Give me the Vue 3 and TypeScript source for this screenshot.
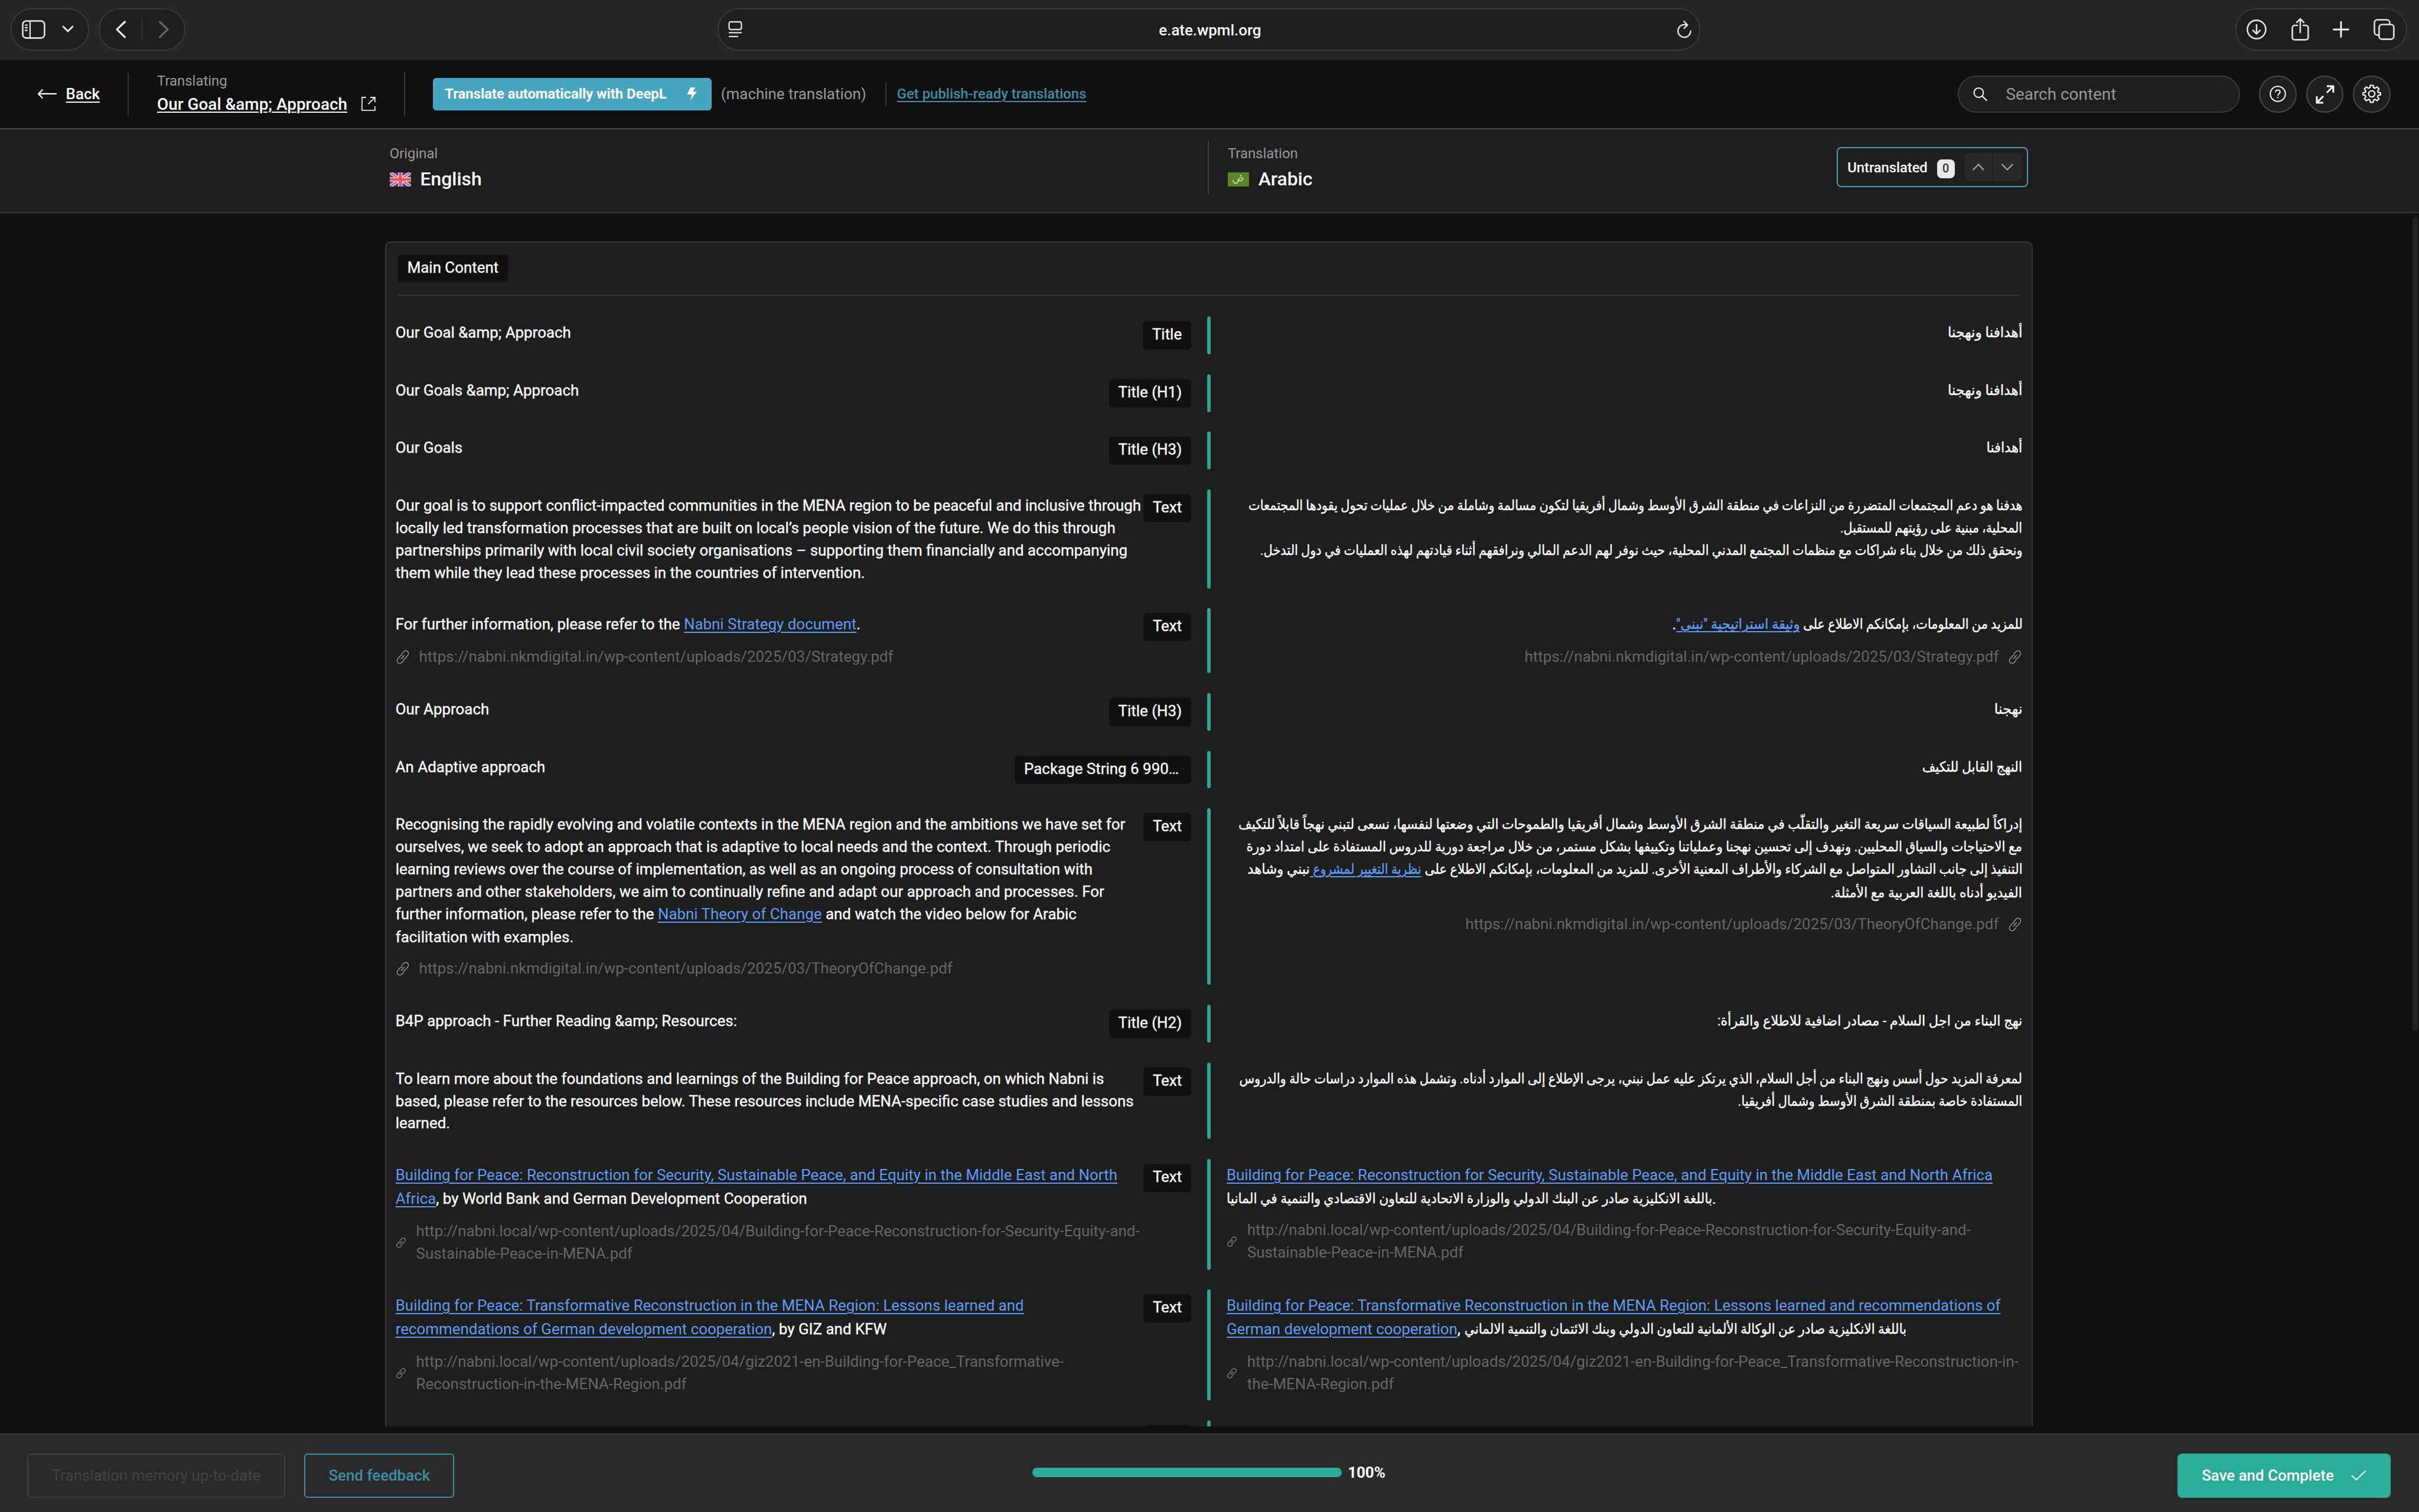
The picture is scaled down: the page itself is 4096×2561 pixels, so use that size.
<script setup lang="ts">
import { ref, onMounted } from 'vue'

interface Seg { t: string; link?: boolean; ar?: number }
interface Cell { lines: Seg[][]; url?: string[] }
interface Row { h: number; chip: string; chipW?: number; src: Cell; dst: Cell; rtl: boolean }

const s = (t: string): Seg => ({ t })
const l = (t: string): Seg => ({ t, link: true })
const plain = (...t: string[]): Cell => ({ lines: t.map((x) => [s(x)]) })

const STRATEGY = 'https://nabni.nkmdigital.in/wp-content/uploads/2025/03/Strategy.pdf'
const THEORY = 'https://nabni.nkmdigital.in/wp-content/uploads/2025/03/TheoryOfChange.pdf'

// `ar` holds the set width of an Arabic run
const a = (t: string, ar: number): Seg => ({ t, ar })

const rows: Row[] = [
  { h: 64, chip: 'Title', rtl: true, src: plain('Our Goal &amp; Approach'), dst: { lines: [[a('أهدافنا ونهجنا', 127)]] } },
  { h: 64, chip: 'Title (H1)', rtl: true, src: plain('Our Goals &amp; Approach'), dst: { lines: [[a('أهدافنا ونهجنا', 127)]] } },
  { h: 64, chip: 'Title (H3)', rtl: true, src: plain('Our Goals'), dst: { lines: [[a('أهدافنا', 61)]] } },
  {
    h: 168, chip: 'Text', rtl: true,
    src: plain(
      'Our goal is to support conflict-impacted communities in the MENA region to be peaceful and inclusive through',
      'locally led transformation processes that are built on local’s people vision of the future. We do this through',
      'partnerships primarily with local civil society organisations – supporting them financially and accompanying',
      'them while they lead these processes in the countries of intervention.'
    ),
    dst: {
      lines: [
        [a('هدفنا هو دعم المجتمعات المتضررة من النزاعات في منطقة الشرق الأوسط وشمال أفريقيا لتكون مسالمة وشاملة من خلال عمليات تحول يقودها المجتمعات', 1315)],
        [a('المحلية، مبنية على رؤيتهم للمستقبل.', 309)],
        [a('ونحقق ذلك من خلال بناء شراكات مع منظمات المجتمع المدني المحلية، حيث نوفر لهم الدعم المالي ونرافقهم أثناء قيادتهم لهذه العمليات في دول التدخل.', 1295)],
      ],
    },
  },
  {
    h: 110, chip: 'Text', rtl: true,
    src: { lines: [[s('For further information, please refer to the '), l('Nabni Strategy document'), s('.')]], url: [STRATEGY] },
    dst: { lines: [[a('للمزيد من المعلومات، بإمكانكم الاطلاع على ', 378), { t: 'وثيقة استراتيجية "نبني"', link: true, ar: 210 }, s('.')]], url: [STRATEGY] },
  },
  { h: 64, chip: 'Title (H3)', rtl: true, src: plain('Our Approach'), dst: { lines: [[a('نهجنا', 48)]] } },
  { h: 64, chip: 'Package String 6 990…', chipW: 300, rtl: true, src: plain('An Adaptive approach'), dst: { lines: [[a('النهج القابل للتكيف', 170)]] } },
  {
    h: 300, chip: 'Text', rtl: true,
    src: {
      lines: [
        [s('Recognising the rapidly evolving and volatile contexts in the MENA region and the ambitions we have set for')],
        [s('ourselves, we seek to adopt an approach that is adaptive to local needs and the context. Through periodic')],
        [s('learning reviews over the course of implementation, as well as an ongoing process of consultation with')],
        [s('partners and other stakeholders, we aim to continually refine and adapt our approach and processes. For')],
        [s('further information, please refer to the '), l('Nabni Theory of Change'), s(' and watch the video below for Arabic')],
        [s('facilitation with examples.')],
      ],
      url: [THEORY],
    },
    dst: {
      lines: [
        [a('إدراكاً لطبيعة السياقات سريعة التغير والتقلّب في منطقة الشرق الأوسط وشمال أفريقيا والطموحات التي وضعتها لنفسها، نسعى لتبني نهجاً قابلاً للتكيف', 1332)],
        [a('مع الاحتياجات والسياق المحليين. ونهدف إلى تحسين نهجنا وعملياتنا وتكييفها بشكل مستمر، من خلال مراجعة دورية للدروس المستفادة على امتداد دورة', 1318)],
        [
          a('التنفيذ إلى جانب التشاور المتواصل مع الشركاء والأطراف المعنية الأخرى. للمزيد من المعلومات، بإمكانكم الاطلاع على ', 1021),
          { t: 'نظرية التغيير لمشروع ', link: true, ar: 189 },
          a('نبني وشاهد', 106),
        ],
        [a('الفيديو أدناه باللغة العربية مع الأمثلة.', 325)],
      ],
      url: [THEORY],
    },
  },
  { h: 64, chip: 'Title (H2)', rtl: true, src: plain('B4P approach - Further Reading &amp; Resources:'), dst: { lines: [[a('نهج البناء من اجل السلام - مصادر اضافية للاطلاع والقرأة:', 518)]] } },
  {
    h: 130, chip: 'Text', rtl: true,
    src: plain(
      'To learn more about the foundations and learnings of the Building for Peace approach, on which Nabni is',
      'based, please refer to the resources below. These resources include MENA-specific case studies and lessons',
      'learned.'
    ),
    dst: {
      lines: [
        [a('لمعرفة المزيد حول أسس ونهج البناء من أجل السلام، الذي يرتكز عليه عمل نبني، يرجى الإطلاع إلى الموارد أدناه. وتشمل هذه الموارد دراسات حالة والدروس', 1330)],
        [a('المستفادة خاصة بمنطقة الشرق الأوسط وشمال أفريقيا.', 483)],
      ],
    },
  },
  {
    h: 188, chip: 'Text', rtl: false,
    src: {
      lines: [
        [l('Building for Peace: Reconstruction for Security, Sustainable Peace, and Equity in the Middle East and North')],
        [l('Africa'), s(', by World Bank and German Development Cooperation')],
      ],
      url: ['http://nabni.local/wp-content/uploads/2025/04/Building-for-Peace-Reconstruction-for-Security-Equity-and-', 'Sustainable-Peace-in-MENA.pdf'],
    },
    dst: {
      lines: [
        [l('Building for Peace: Reconstruction for Security, Sustainable Peace, and Equity in the Middle East and North Africa')],
        [a('باللغة الانكليزية صادر عن البنك الدولي والوزارة الاتحادية للتعاون الاقتصادي والتنمية في المانيا', 825), s('.')],
      ],
      url: ['http://nabni.local/wp-content/uploads/2025/04/Building-for-Peace-Reconstruction-for-Security-Equity-and-', 'Sustainable-Peace-in-MENA.pdf'],
    },
  },
  {
    h: 188, chip: 'Text', rtl: false,
    src: {
      lines: [
        [l('Building for Peace: Transformative Reconstruction in the MENA Region: Lessons learned and')],
        [l('recommendations of German development cooperation'), s(', by GIZ and KFW')],
      ],
      url: ['http://nabni.local/wp-content/uploads/2025/04/giz2021-en-Building-for-Peace_Transformative-', 'Reconstruction-in-the-MENA-Region.pdf'],
    },
    dst: {
      lines: [
        [l('Building for Peace: Transformative Reconstruction in the MENA Region: Lessons learned and recommendations of')],
        [l('German development cooperation'), s(', '), a('باللغة الانكليزية صادر عن الوكالة الألمانية للتعاون الدولي وبنك الائتمان والتنمية الالماني', 751)],
      ],
      url: ['http://nabni.local/wp-content/uploads/2025/04/giz2021-en-Building-for-Peace_Transformative-Reconstruction-in-', 'the-MENA-Region.pdf'],
    },
  },
  { h: 64, chip: '', chipW: 81, rtl: true, src: plain(''), dst: plain('') },
]

const hasLink = (line: Seg[]) => line.some((x) => x.link)

const root = ref<HTMLElement | null>(null)

// Each Arabic run sits in a box of its set width; the glyphs are condensed to fill it.
onMounted(() => {
  const el = root.value
  if (!el) return
  el.querySelectorAll<HTMLElement>('.ar').forEach((box) => {
    const inner = box.firstElementChild as HTMLElement
    const k = box.getBoundingClientRect().width / inner.getBoundingClientRect().width
    inner.style.transform = `scaleX(${k})`
  })
})
</script>

<template>
  <div ref="root" class="app">
    <div class="chrome">
      <div class="pill p1">
        <svg width="40" height="32" viewBox="0 0 40 32" fill="none" stroke="#e6e6e6" stroke-width="2.6"><rect x="1.5" y="1.5" width="37" height="29" rx="6" /><path d="M14 2v28M5 8.500h5M5 13h5M5 17.500h5" stroke-width="2.2" /></svg>
        <svg class="cv" width="20" height="13" viewBox="0 0 20 13" fill="none" stroke="#e6e6e6" stroke-width="3" stroke-linecap="round" stroke-linejoin="round"><path d="M2 2l8 8 8-8" /></svg>
      </div>
      <div class="pill p2">
        <svg width="18" height="30" viewBox="0 0 18 30" fill="none" stroke="#f0f0f0" stroke-width="3.2" stroke-linecap="round" stroke-linejoin="round"><path d="M15.500 2L2 15l13.500 13" /></svg>
        <i class="vline" />
        <svg width="18" height="30" viewBox="0 0 18 30" fill="none" stroke="#666" stroke-width="3.2" stroke-linecap="round" stroke-linejoin="round"><path d="M2.500 2L16 15 2.500 28" /></svg>
      </div>
      <div class="pill url">
        <svg width="24" height="30" viewBox="0 0 24 30" fill="none" stroke="#ddd" stroke-width="2.4"><rect x="1.500" y="2" width="21" height="13" rx="3" /><path d="M1 20.500h22M1 27h16" /></svg>
        <span>e.ate.wpml.org</span>
        <svg width="26" height="32" viewBox="0 0 26 32" fill="none" stroke="#e0e0e0" stroke-width="2.400" stroke-linecap="round" stroke-linejoin="round"><path d="M15.500 8A10.800 10.800 0 1 0 23.800 18.500M12.500 2l6 6.500-6 5.500" /></svg>
      </div>
      <div class="pill p3">
        <svg width="36" height="36" viewBox="0 0 36 36" fill="none" stroke="#e2e2e2" stroke-width="2.600" stroke-linecap="round" stroke-linejoin="round"><circle cx="18" cy="18" r="15.600" /><path d="M18 10v15M12 19.500l6 6 6-6" /></svg>
        <svg width="30" height="40" viewBox="0 0 30 40" fill="none" stroke="#e2e2e2" stroke-width="2.600" stroke-linecap="round" stroke-linejoin="round"><path d="M10 13H5.500a4 4 0 0 0-4 4v16.500a4 4 0 0 0 4 4h19a4 4 0 0 0 4-4V17a4 4 0 0 0-4-4H20M15 25V2.500M9 8l6-6 6 6" /></svg>
        <svg width="28" height="28" viewBox="0 0 28 28" fill="none" stroke="#f0f0f0" stroke-width="3" stroke-linecap="round"><path d="M14 1.500v25M1.500 14h25" /></svg>
        <svg width="36" height="36" viewBox="0 0 36 36" fill="none" stroke="#e2e2e2" stroke-width="2.600" stroke-linejoin="round"><rect x="9.500" y="9.500" width="25" height="25" rx="5" /><path d="M9.500 27.500H6.500a5 5 0 0 1-5-5v-16a5 5 0 0 1 5-5h16a5 5 0 0 1 5 5v3" /></svg>
      </div>
    </div>

    <header class="top">
      <svg class="arrow" width="34" height="18" viewBox="0 0 34 18" fill="none" stroke="#fff" stroke-width="2.200"><path d="M33 9H2M9.500 1.500L2 9l7.500 7.500" /></svg>
      <span class="back">Back</span>
      <i class="sep s1" />
      <div class="job">
        <div class="muted">Translating</div>
        <div class="jobname">
          <u>Our Goal &amp;amp; Approach</u>
          <svg width="24" height="24" viewBox="0 0 24 24" fill="none" stroke="#e6e6e6" stroke-width="1.800"><path d="M8 1H1v22h22v-7M15 1h8v8M23 1L11.500 12.500" /></svg>
        </div>
      </div>
      <i class="sep s2" />
      <div class="deepl">
        <span>Translate automatically with DeepL</span>
        <svg width="17" height="22" viewBox="0 0 17 22" fill="#fff"><path d="M6 0h8l-3.500 7.500H17L5.500 22l3-10H0.500z" /></svg>
      </div>
      <span class="mt">(machine translation)</span>
      <i class="sep s3" />
      <u class="pub">Get publish-ready translations</u>
      <div class="search">
        <svg width="25" height="25" viewBox="0 0 25 25" fill="none" stroke="#fff" stroke-width="2"><circle cx="9.500" cy="10" r="8" /><path d="M15.500 16l8 7.500" /></svg>
        <span>Search content</span>
      </div>
      <div class="round r1"><svg width="28" height="28" viewBox="0 0 28 28" fill="none" stroke="#fff" stroke-width="2"><circle cx="14" cy="14" r="12.800" /><path d="M10.200 11.200c0-5 7.600-5 7.600-.2 0 3-3.800 3-3.800 6.200M14 19.400v2.200" /></svg></div>
      <div class="round"><svg width="34" height="34" viewBox="0 0 34 34" fill="none" stroke="#fff" stroke-width="3"><path d="M20 3h11v11M30.500 3.500L20 14M14 31H3V20M3.500 30.500L14 20" /></svg></div>
      <div class="round"><svg width="32" height="32" viewBox="0 0 32 32" fill="none" stroke="#fff" stroke-width="2.200" stroke-linejoin="round"><circle cx="16" cy="16" r="5.200" /><path d="M13.600 1.500h4.800l.8 4.100 2.300 1 3.500-2.400 3.400 3.400-2.400 3.500 1 2.300 4 .8v3.600l-4 .8-1 2.300 2.400 3.500-3.400 3.400-3.500-2.400-2.300 1-.8 4.100h-4.800l-.8-4.100-2.300-1-3.500 2.400-3.400-3.400L6 20.900l-1-2.300-4-.8v-3.600l4-.8 1-2.300-2.400-3.500L7 4.200l3.500 2.400 2.300-1z" /></svg></div>
    </header>

    <div class="langs">
      <div class="lang">
        <div class="muted">Original</div>
        <div class="lname">
          <svg width="36" height="24" viewBox="0 0 36 24"><rect width="36" height="24" fill="#0f4fa8" /><path d="M0 0l36 24M36 0L0 24" stroke="#f3e4e8" stroke-width="5.500" /><path d="M0 0l36 24M36 0L0 24" stroke="#f4505c" stroke-width="2.600" /><path d="M18 0v24M0 12h36" stroke="#f3e4e8" stroke-width="7.400" /><path d="M18 0v24M0 12h36" stroke="#f4505c" stroke-width="5" /></svg>
          <span>English</span>
        </div>
      </div>
      <i class="sep ls" />
      <div class="lang l2">
        <div class="muted">Translation</div>
        <div class="lname">
          <svg width="36" height="24" viewBox="0 0 36 24"><rect width="36" height="24" fill="#5c8526" /><path d="M9.500 13c-1.500 6.500 6 7.500 8 1.500v-3M17.500 14c1.500-6 8.500-6 8-2.500-.5 2.500-4.500 3-8 2.500" stroke="#eef3e4" stroke-width="1.400" fill="none" /><circle cx="22" cy="5.500" r="1.200" fill="#eef3e4" /></svg>
          <span>Arabic</span>
        </div>
      </div>
      <div class="untr">
        <span class="ut">Untranslated</span>
        <span class="badge">0</span>
        <span class="nav nl"><svg width="20" height="12" viewBox="0 0 20 12" fill="none" stroke="#aaa" stroke-width="2"><path d="M.700 11L10 1.500 19.300 11" /></svg></span>
        <span class="nav nr"><svg width="20" height="12" viewBox="0 0 20 12" fill="none" stroke="#aaa" stroke-width="2"><path d="M.700 1L10 10.500 19.300 1" /></svg></span>
      </div>
    </div>

    <main class="body">
      <section class="panel">
        <div class="phead"><span class="chip">Main Content</span></div>
        <div v-for="(r, i) in rows" :key="i" class="row">
          <div class="inner" :style="{ height: r.h + 'px' }">
            <div class="cell src">
              <div v-for="(line, j) in r.src.lines" :key="j" class="line" :class="{ tall: hasLink(line) }"><span v-for="(g, k) in line" :key="k" :class="{ lk: g.link }">{{ g.t }}</span></div>
              <div v-if="r.src.url" class="ref" :class="{ multi: r.src.url.length > 1 }">
                <svg class="lki" viewBox="0 0 24 24" fill="none" stroke="#999" stroke-width="1.500" stroke-linecap="round"><path d="M10.200 6.500l3.300-3.600a4.600 4.600 0 0 1 7 6l-4 4.800a4.400 4.400 0 0 1-3.200 1.500M13.800 17.500l-3.300 3.600a4.600 4.600 0 0 1-7-6l4-4.800a4.400 4.400 0 0 1 3.200-1.500M9.500 14.800l5-5.800" /></svg>
                <div><div v-for="u in r.src.url" :key="u" class="uline">{{ u }}</div></div>
              </div>
            </div>
            <span class="chip tag" :style="r.chipW ? { width: r.chipW + 'px' } : undefined">{{ r.chip }}</span>
            <i class="bar" />
            <div class="cell dst" :class="{ rtl: r.rtl }">
              <div v-for="(line, j) in r.dst.lines" :key="j" class="line" :class="{ tall: hasLink(line) }"><template v-for="(g, k) in line" :key="k"><span v-if="g.ar" class="ar" :class="{ lk: g.link }" :style="{ width: g.ar + 'px' }"><span>{{ g.t }}</span></span><span v-else :class="{ lk: g.link }">{{ g.t }}</span></template></div>
              <div v-if="r.dst.url" class="ref" :class="{ multi: r.dst.url.length > 1 }">
                <svg class="lki" viewBox="0 0 24 24" fill="none" stroke="#999" stroke-width="1.500" stroke-linecap="round"><path d="M10.200 6.500l3.300-3.600a4.600 4.600 0 0 1 7 6l-4 4.800a4.400 4.400 0 0 1-3.200 1.500M13.800 17.500l-3.300 3.600a4.600 4.600 0 0 1-7-6l4-4.800a4.400 4.400 0 0 1 3.200-1.500M9.500 14.800l5-5.800" /></svg>
                <div><div v-for="u in r.dst.url" :key="u" class="uline">{{ u }}</div></div>
              </div>
            </div>
          </div>
        </div>
      </section>
      <i class="thumb" />
    </main>

    <footer class="foot">
      <span class="btn tm">Translation memory up-to-date</span>
      <span class="btn fb">Send feedback</span>
      <i class="prog" />
      <span class="pct">100%</span>
      <span class="btn save"><span>Save and Complete</span><svg width="26" height="18" viewBox="0 0 26 18" fill="none" stroke="#fff" stroke-width="2"><path d="M1 9l8 7.500L25 1" /></svg></span>
    </footer>
  </div>
</template>

<style>
html, body { margin: 0; background: #101010; overflow: hidden; }
</style>

<style scoped>
.app {
  --ln: 2.01px;
  zoom: 0.996594;
  width: 4110px;
  height: 2570px;
  overflow: hidden;
  display: flex;
  flex-direction: column;
  background: #101010;
  color: #fff;
  font-family: Roboto, "DejaVu Sans", sans-serif;
  font-size: 26px;
  white-space: nowrap;
}
.app * { box-sizing: border-box; }
svg { display: block; flex: none; }
i { display: block; flex: none; }

.chrome { height: 102px; flex: none; background: #262626; display: flex; align-items: flex-start; padding-top: 14px; }
.pill { height: 72px; border-radius: 36px; background: #1e1e1e; border: var(--ln) solid #383838; display: flex; align-items: center; flex: none; }
.p1 { width: 134px; margin-left: 18px; padding-left: 17px; }
.p1 .cv { margin-left: 28px; }
.p2 { width: 147px; margin-left: 16px; padding-left: 27px; }
.vline { width: 2px; height: 40px; background: #2e2e2e; margin: 0 26px; }
.url { width: 1670px; margin-left: 904px; justify-content: space-between; padding: 0 12px 0 16px; }
.url span { font-size: 26px; font-weight: 500; padding: 2px 0 0 2px; }
.p3 { width: 292px; margin-left: 909px; padding: 0 19px 0 16px; justify-content: space-between; }

.top { height: 118px; flex: none; border-bottom: var(--ln) solid #484848; display: flex; align-items: center; }
.arrow { margin-left: 63px; }
.back { margin-left: 15px; width: 57px; font-weight: 500; text-decoration: underline; text-underline-offset: 4px; text-decoration-thickness: 2px; }
.sep { width: 2px; background: #383838; }
.s1 { height: 72px; margin-left: 48px; }
.job { width: 371px; margin-left: 48px; }
.muted { font-size: 24px; line-height: 32px; color: #999; }
.job .muted { height: 34px; }
.jobname { display: flex; align-items: center; justify-content: space-between; height: 42px; font-size: 28px; font-weight: 500; }
.jobname u { text-underline-offset: 3px; text-decoration-thickness: 2px; }
.s2 { height: 76px; margin-left: 48px; }
.deepl { width: 473px; height: 56px; margin-left: 48px; border-radius: 6px; background: #48a5bf; display: flex; align-items: center; justify-content: space-between; padding: 0 25px 0 20px; font-size: 24px; font-weight: 700; letter-spacing: -0.06px; }
.mt { margin-left: 16px; width: 279px; font-size: 26px; color: #999; }
.s3 { height: 40px; }
.pub { margin-left: 18px; font-size: 24px; color: #3f8ea5; font-weight: 500; text-underline-offset: 4px; text-decoration-thickness: 2px; }
.search { margin-left: auto; width: 480px; height: 64px; border-radius: 32px; border: var(--ln) solid #383838; background: #1e1e1e; display: flex; align-items: center; padding-left: 24px; gap: 31px; color: #999; font-size: 28px; }
.round { width: 64px; height: 64px; border-radius: 50%; border: var(--ln) solid #484848; background: #1e1e1e; display: flex; align-items: center; justify-content: center; margin-right: 16px; flex: none; }
.r1 { margin-left: 32px; }
.round:last-child { margin-right: 48px; }

.langs { height: 142px; flex: none; background: #1e1e1e; border-bottom: var(--ln) solid #383838; display: flex; align-items: flex-start; }
.lang { width: 1390px; margin-left: 662px; padding-top: 26px; flex: none; }
.lname { display: flex; align-items: center; gap: 16px; height: 38px; margin-top: 8px; font-size: 32px; font-weight: 500; }
.lname span { margin-top: -2px; }
.ls { height: 90px; margin-top: 19px; background: #444; }
.l2 { width: 1035px; margin-left: 32px; }
.untr { width: 325px; height: 68px; margin-top: 30px; border: var(--ln) solid #48a0b8; border-radius: 8px; display: flex; align-items: center; padding-left: 16px; font-size: 24px; font-weight: 500; }
.ut { width: 152px; padding-top: 1px; letter-spacing: -0.1px; }
.badge { width: 30px; height: 32px; border-radius: 8px; background: #e8e8e8; color: #333; font-size: 20px; display: flex; align-items: center; justify-content: center; margin: 6px 16px 0 0; }
.nav { width: 48px; height: 48px; background: #292929; display: flex; align-items: center; justify-content: center; }
.nl { border-radius: 8px 0 0 8px; margin-right: 2px; }
.nr { border-radius: 0 8px 8px 0; }

.body { height: 2062px; flex: none; display: flex; align-items: flex-start; position: relative; margin-bottom: 12px; overflow: hidden; }
.panel { width: 2800px; margin: 48px 0 0 654px; background: #1e1e1e; border: var(--ln) solid #383838; border-radius: 10px 10px 0 0; flex: none; }
.phead { height: 91px; margin: 0 20px 18px; padding-top: 20px; border-bottom: var(--ln) solid #363636; }
.chip { display: inline-block; height: 48px; line-height: 46px; padding: 0 16px; background: #101010; border-radius: 6px; -webkit-text-stroke: 0.35px currentColor; }
.thumb { position: absolute; right: 1px; top: 6px; width: 10px; height: 1384px; border-radius: 5px; background: #222; }
.row { padding: 17px 16px 17px 16px; }
.inner { display: flex; align-items: stretch; }
.cell { padding-top: 9px; flex: none; }
.src { width: 1266px; margin-right: auto; }
.line, .uline { height: 38px; line-height: 38px; }
.line { -webkit-text-stroke: 0.35px currentColor; }
.tall { height: 40px; }
.tag { margin-top: 8px; margin-left: -300px; flex: none; }
.bar { width: 6px; margin: 0 27px; border-radius: 3px; background: #2fa591; }
.dst { width: 1352px; }
.rtl { direction: rtl; }
.line span { white-space: pre; }
.lk { color: #5f9cf5; text-decoration: underline; text-decoration-thickness: 2px; text-underline-offset: 4px; -webkit-text-stroke: 0; }
.ar { display: inline-block; direction: rtl; vertical-align: top; height: 38px; font-size: 24px; -webkit-text-stroke: 0.4px currentColor; }
.ar > span { display: inline-block; transform-origin: 100% 50%; text-decoration: inherit; }
.ref { margin-top: 15px; display: flex; align-items: center; gap: 16px; color: #666; }
.lki { width: 24px; height: 24px; }
.multi .lki { width: 18px; height: 18px; }
.multi { gap: 17px; }

.foot { height: 134px; flex: none; background: #2a2a2a; border-top: var(--ln) solid #404040; display: flex; align-items: flex-start; padding-top: 32px; font-size: 26px; }
.btn { height: 76px; border-radius: 6px; border: var(--ln) solid #404040; display: flex; align-items: center; justify-content: center; flex: none; padding-bottom: 1px; }
.tm { width: 439px; margin-left: 46px; color: #444; }
.fb { width: 255px; margin-left: 32px; border-color: #3f8ea5; color: #3f8ea5; font-weight: 500; }
.prog { width: 526px; height: 16px; margin: 25px 0 0 982px; border-radius: 8px; background: #2aad98; }
.pct { margin: 17px 0 0 10px; width: 1410px; font-size: 26px; font-weight: 700; }
.save { width: 362px; background: #2aad98; border: 0; font-weight: 500; justify-content: space-between; padding: 0 41px 1px 41px; border-radius: 8px; }
</style>
